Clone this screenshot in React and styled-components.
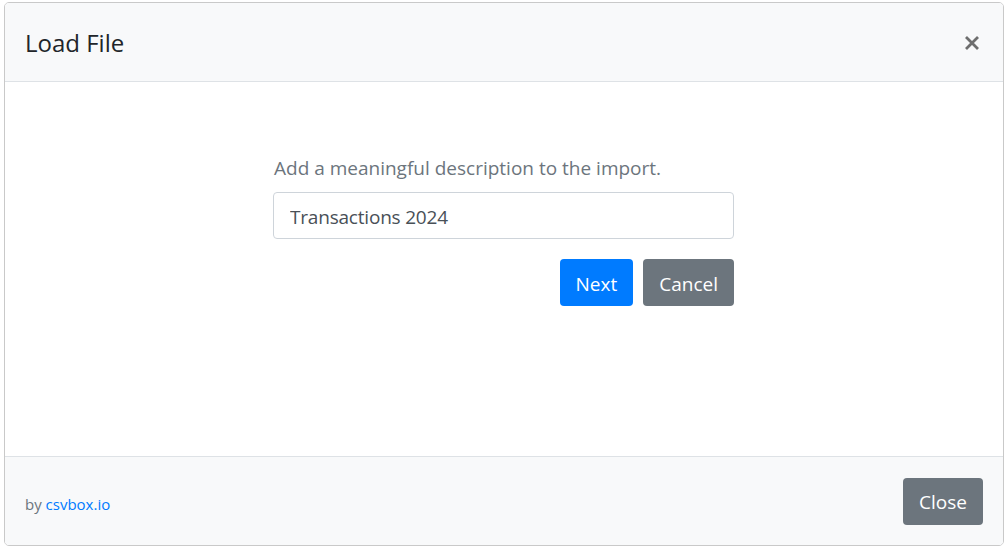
import React from "react";
import styled, { createGlobalStyle } from "styled-components";

const Global = createGlobalStyle`
  html, body { margin: 0; padding: 0; background: #ffffff; }
  body { font-family: "Open Sans", "Noto Sans", "Liberation Sans", sans-serif; }
  * { box-sizing: border-box; }
`;

const Page = styled.div`
  padding: 2px 2px 2px 4px;
  width: 1006px;
  height: 548px;
`;

const Modal = styled.div`
  width: 1000px;
  height: 544px;
  border: 1px solid #c9c9c9;
  border-radius: 5px;
  overflow: hidden;
  display: flex;
  flex-direction: column;
  background: #fff;
`;

const Header = styled.div`
  height: 79px;
  flex: none;
  background: #f8f9fa;
  border-bottom: 1px solid #dee2e6;
  display: flex;
  align-items: center;
  justify-content: space-between;
  padding: 2px 19px 0 20px;
`;

const Title = styled.h5`
  margin: 0;
  font-size: 24px;
  font-weight: 500;
  color: #212529;
  line-height: 1;
`;

const CloseX = styled.button`
  border: none;
  background: transparent;
  padding: 0;
  width: 24px;
  height: 24px;
  display: flex;
  align-items: center;
  justify-content: center;
  cursor: pointer;
`;

const Body = styled.div`
  flex: 1;
  display: flex;
  justify-content: center;
  padding: 72px 1px 0 0;
`;

const Form = styled.div`
  width: 461px;
  display: flex;
  flex-direction: column;
`;

const Label = styled.div`
  font-size: 19px;
  line-height: 28px;
  color: #6c757d;
  padding-left: 1px;
  margin-bottom: 10px;
`;

const Input = styled.input`
  height: 47px;
  width: 100%;
  border: 1px solid #ced4da;
  border-radius: 4px;
  padding: 3px 16px 0 16px;
  font-family: inherit;
  font-size: 19px;
  letter-spacing: -0.2px;
  color: #495057;
  outline: none;
`;

const Actions = styled.div`
  display: flex;
  justify-content: flex-end;
  gap: 10px;
  margin-top: 20px;
`;

const Button = styled.button`
  height: 47px;
  padding: 2px 16px 0 16px;
  border: none;
  border-radius: 4px;
  font-family: inherit;
  font-size: 19px;
  color: #fff;
  background: ${(p) => (p.$variant === "primary" ? "#007bff" : "#6c757d")};
  cursor: pointer;
`;

const Footer = styled.div`
  flex: none;
  height: 89px;
  background: #f8f9fa;
  border-top: 1px solid #dee2e6;
  display: flex;
  align-items: center;
  justify-content: space-between;
  padding: 0 20px 0 20px;
`;

const Credit = styled.div`
  font-size: 15px;
  color: #6c757d;
  padding-top: 6px;
  a { color: #007bff; text-decoration: none; }
`;

export default function App() {
  return (
    <Page>
      <Global />
      <Modal>
        <Header>
          <Title>Load File</Title>
          <CloseX aria-label="Close">
            <svg width="16" height="16" viewBox="0 0 16 16">
              <path d="M2 2 L14 14 M14 2 L2 14" stroke="#6e6e6e" strokeWidth="2.8" strokeLinecap="butt" />
            </svg>
          </CloseX>
        </Header>
        <Body>
          <Form>
            <Label>Add a meaningful description to the import.</Label>
            <Input defaultValue="Transactions 2024" />
            <Actions>
              <Button $variant="primary">Next</Button>
              <Button $variant="secondary">Cancel</Button>
            </Actions>
          </Form>
        </Body>
        <Footer>
          <Credit>
            by <a href="#">csvbox.io</a>
          </Credit>
          <Button $variant="secondary">Close</Button>
        </Footer>
      </Modal>
    </Page>
  );
}
